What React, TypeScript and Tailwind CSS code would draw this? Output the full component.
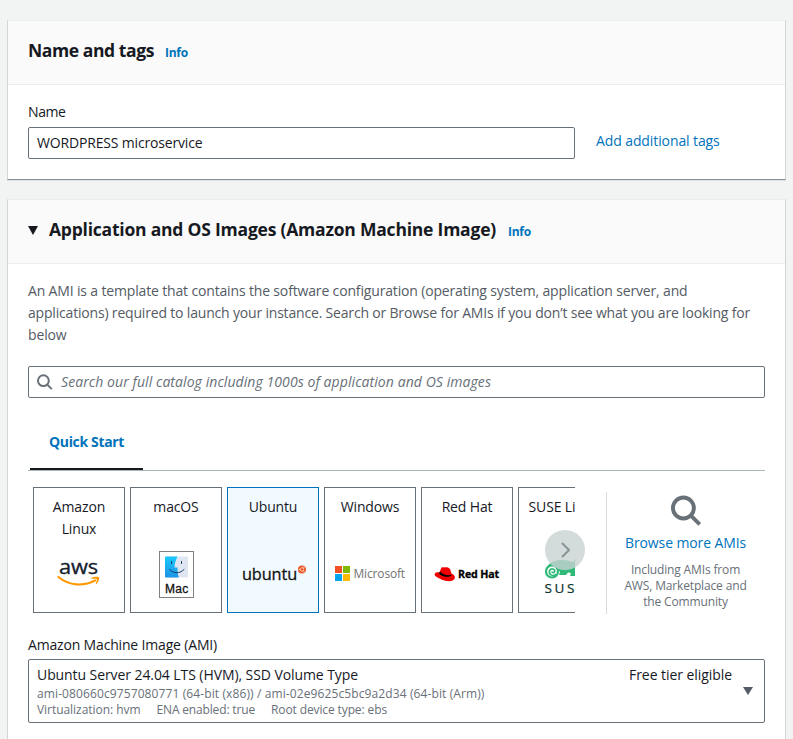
import type { ReactNode } from "react";

function SearchIcon({ className }: { className: string }) {
  return (
    <svg viewBox="0 0 16 16" className={className} fill="none" stroke="#687078" strokeWidth="2">
      <circle cx="6.400" cy="6.700" r="5.400" />
      <path d="M10.300 10.600l4.500 4.500" />
    </svg>
  );
}

function Panel({ header, className, children }: { header: ReactNode; className: string; children: ReactNode }) {
  return (
    <section className={`bg-white border border-t-[#eaeded] border-x-[#d0d5d5] ${className}`}>
      <header className="h-16 border-b border-[#eaeded] bg-[#fafafa] flex items-center px-5">{header}</header>
      {children}
    </section>
  );
}

function OsCard({ label, selected, children }: { label: ReactNode; selected?: boolean; children: ReactNode }) {
  return (
    <div
      className={`w-[92px] h-[126px] shrink-0 border flex flex-col text-center leading-[22px] pt-2 ${
        selected ? "border-[#0073bb] bg-[#f1faff]" : "border-[#687078] bg-white"
      }`}
    >
      <div className="h-[44px] whitespace-nowrap">{label}</div>
      <div className="h-[68px] flex items-center justify-center">{children}</div>
    </div>
  );
}

function AwsLogo() {
  return (
    <svg width="44" height="30" viewBox="0 0 44 30" className="overflow-visible">
      <text x="2" y="14.500" fontFamily="Open Sans, sans-serif" fontSize="20.500" textLength="39" lengthAdjust="spacingAndGlyphs" fill="#161e2d" stroke="#161e2d" strokeWidth=".35">aws</text>
      <path d="M1.500 18C12 27 27 27.500 38 21.500" fill="none" stroke="#ff9900" strokeWidth="2.200" strokeLinecap="round" />
      <path d="M34.500 18.800c3-1.300 6.900-1.200 7.500-.5.6.9-.4 4.900-2.600 6.900l-.7-.4c.8-2 1.500-4 .9-4.700-.6-.6-3-.5-5.100-.3z" fill="#ff9900" />
    </svg>
  );
}

function MacLogo() {
  return (
    <svg width="35" height="47" viewBox="0 0 35 47" className="ml-px mt-px">
      <defs>
        <linearGradient id="finder" x1="0" y1="0" x2="0" y2="1">
          <stop offset="0" stopColor="#19c8fb" />
          <stop offset="1" stopColor="#1e94e6" />
        </linearGradient>
      </defs>
      <rect x=".5" y=".5" width="34" height="46" fill="#fff" stroke="#808080" />
      <rect x="6" y="5.500" width="23" height="21" rx="1" fill="#dfe6f1" />
      <path d="M7 5.500h11.500c-2 4-3 7.500-3 11h3c0 4 .3 7 1.300 10H7a1 1 0 0 1-1-1v-19a1 1 0 0 1 1-1z" fill="url(#finder)" />
      <path d="M12.500 10.500v2M22.500 10.500v2M10.500 18.500c4 4.300 10.500 4.300 14.500 0" fill="none" stroke="#173a5e" strokeLinecap="round" />
      <text x="6" y="41.500" fontFamily="Liberation Sans, sans-serif" fontSize="12" textLength="23" stroke="#111" strokeWidth=".3" fill="#111">Mac</text>
    </svg>
  );
}

function UbuntuLogo() {
  return (
    <svg width="66" height="20" viewBox="0 0 66 20" fill="none" className="overflow-visible">
      <text x="2" y="15.500" fontFamily="Open Sans, sans-serif" fontSize="17" textLength="55" lengthAdjust="spacingAndGlyphs" fill="#111" stroke="#111" strokeWidth=".3">ubuntu</text>
      <circle cx="62" cy="5.500" r="4" fill="#e95420" />
      <circle cx="62" cy="5.500" r="1.800" stroke="#fbd5c7" strokeWidth=".9" />
      <path d="M64 2.500v1.200M58.800 5.500h1M64 7.500v1" stroke="#fff" strokeWidth="1" />
    </svg>
  );
}

function MicrosoftLogo() {
  return (
    <svg width="72" height="17" viewBox="0 0 72 17" className="-mt-px">
      <path d="M1 1h7v7H1z" fill="#f25022" />
      <path d="M9 1h7v7H9z" fill="#7fba00" />
      <path d="M1 9h7v7H1z" fill="#00a4ef" />
      <path d="M9 9h7v7H9z" fill="#ffb900" />
      <text x="19.500" y="12.700" fontFamily="Open Sans, sans-serif" fontWeight="500" fontSize="12.500" textLength="51.500" lengthAdjust="spacingAndGlyphs" fill="#737373">Microsoft</text>
    </svg>
  );
}

function RedHatLogo() {
  return (
    <svg width="66" height="18" viewBox="0 0 66 18">
      <path d="M.8 8.800c1-1.500 2.700-1.700 4.700-1.300L7 3.500C7.500 2 9 2 10.500 2.600c1.500-.8 4.500-.2 5.500 1.400l1.500 4.500c3 1.500 4.300 3.500 2.700 5.800-2.200 3-9.700 2.100-14.700-.9C2 12-.2 10.500.8 8.800z" fill="#e00" />
      <path d="M5.300 7.700c-.7 2.800 8.700 5.500 11.700 3l.5-1.300c-2.500 1.800-8.500.5-11.600-2.900z" fill="#000" />
      <text x="24" y="13" fontFamily="Open Sans, sans-serif" fontWeight="700" fontSize="11" textLength="41" lengthAdjust="spacingAndGlyphs" fill="#000" stroke="#000" strokeWidth=".3">Red Hat</text>
    </svg>
  );
}

function SuseLogo() {
  return (
    <svg width="54" height="40" viewBox="0 0 54 40">
      <path d="M1 14C5 7 12 5.500 18 6c5 0 8 2 11 2V5l6 4v11l-4 2h-6l1-3-3-.5-2 2.500h-7l1-3-3-4z" fill="#30ba78" />
      <circle cx="7" cy="17.500" r="6" fill="#fff" stroke="#30ba78" strokeWidth="2.200" />
      <path d="M11 20c-3 3.500-8 0-6.300-3.500 1.600-2.700 5.300-1.500 5 .8-.3 1.900-2.700 1.600-2.700.2" fill="none" stroke="#30ba78" strokeWidth="1.700" />
      <text x="-.5" y="38.500" fontFamily="Open Sans, sans-serif" fontWeight="500" fontSize="13.500" textLength="40" fill="#0c322c" stroke="#0c322c" strokeWidth=".2">SUSE</text>
    </svg>
  );
}

export default function App() {
  return (
    <main className="h-[739px] overflow-hidden bg-[#f2f3f3] pt-5 pl-[7px] pr-[7px] font-['Open_Sans','Noto_Sans',sans-serif] text-sm leading-[22px] tracking-[-0.15px] text-[#16191f]">
      <Panel
        className="h-[160px] border-b-[#879196] shadow-[0_1px_0_#dfe3e3]"
        header={
          <>
            <h2 className="text-[17.5px] font-bold tracking-[-0.41px] -mt-[5px]">Name and tags</h2>
            <a className="ml-[11px] text-xs font-bold tracking-[-0.25px] text-[#0073bb]">Info</a>
          </>
        }
      >
        <div className="flex px-5 pt-4">
          <div className="w-[547px]">
            <label className="block tracking-[-0.41px]">Name</label>
            <div className="mt-1 h-8 rounded-[2px] border border-[#687078] px-2 leading-[30px] tracking-[-0.17px]">
              WORDPRESS microservice
            </div>
          </div>
          <a className="ml-[21px] mt-[29px] tracking-[-0.1px] text-[#0073bb]">Add additional tags</a>
        </div>
      </Panel>

      <Panel
        className="mt-[19px] h-[600px] border-b-[#879196]"
        header={
          <>
            <svg width="10" height="9" viewBox="0 0 10 9" className="-mt-0.5">
              <path d="M0 0h10L5 9z" fill="#16191f" />
            </svg>
            <h2 className="ml-[11px] -mt-[5px] whitespace-nowrap text-[17.5px] font-bold tracking-[-0.215px]">
              Application and OS Images (Amazon Machine Image)
            </h2>
            <a className="ml-3 text-xs font-bold tracking-[-0.25px] text-[#0073bb]">Info</a>
          </>
        }
      >
        <div className="px-5 pt-4">
          <p className="whitespace-nowrap text-[#545b64]">
            <span className="block tracking-[-0.157px]">
              An AMI is a template that contains the software configuration (operating system, application server, and
            </span>
            <span className="block tracking-[-0.183px]">
              applications) required to launch your instance. Search or Browse for AMIs if you don’t see what you are looking for
            </span>
            <span className="block">below</span>
          </p>

          <div className="mt-5 flex h-8 items-center rounded-[2px] border border-[#687078] pl-2">
            <SearchIcon className="size-4" />
            <span className="ml-2 italic tracking-[0.074px] text-[#687078]">
              Search our full catalog including 1000s of application and OS images
            </span>
          </div>

          <div className="mt-8 flex h-[41px] border-b border-[#aab7b8] pl-[2px]">
            <div className="h-10 w-[113px] border-b-2 border-[#16191f] pl-[19px] pt-px font-bold tracking-[-0.347px] text-[#0073bb]">
              Quick Start
            </div>
          </div>

          <div className="flex pt-4">
            <div className="relative ml-[5px] w-[542px]">
              <div className="flex gap-[5px] overflow-hidden">
                <OsCard label={<>Amazon<br />Linux</>}><AwsLogo /></OsCard>
                <OsCard label="macOS"><MacLogo /></OsCard>
                <OsCard label="Ubuntu" selected><UbuntuLogo /></OsCard>
                <OsCard label="Windows"><MicrosoftLogo /></OsCard>
                <OsCard label="Red Hat"><RedHatLogo /></OsCard>
                <OsCard label="SUSE Linux"><div className="ml-4"><SuseLogo /></div></OsCard>
              </div>
              <div className="absolute left-[512px] top-[43px] flex size-10 items-center justify-center rounded-full bg-[#c8d2d2]/80">
                <svg width="9" height="16" viewBox="0 0 9 16" fill="none" stroke="#879596" strokeWidth="2">
                  <path d="M1 1l7 7-7 7" />
                </svg>
              </div>
            </div>
            <div className="ml-[31px] mt-[5px] flex h-[122px] w-[158px] flex-col items-center border-l border-[#d5dbdb] text-center">
              <SearchIcon className="ml-px mt-[3px] size-[31px]" />
              <a className="mt-[6px] tracking-[-0.115px] text-[#0073bb]">Browse more AMIs</a>
              <p className="mt-2 whitespace-nowrap text-xs leading-4 text-[#687078]">
                Including AMIs from<br />AWS, Marketplace and<br />the Community
              </p>
            </div>
          </div>

          <div className="mt-5 tracking-[-0.171px]">Amazon Machine Image (AMI)</div>
          <div className="mt-[3px] flex h-16 rounded-[2px] border border-[#687078] pl-2 pt-1">
            <div className="whitespace-nowrap text-xs leading-4 text-[#687078]">
              <div className="text-sm leading-[22px] tracking-[-0.081px] text-[#16191f]">
                Ubuntu Server 24.04 LTS (HVM), SSD Volume Type
              </div>
              <div className="tracking-[0.108px]">ami-080660c9757080771 (64-bit (x86)) / ami-02e9625c5bc9a2d34 (64-bit (Arm))</div>
              <div className="flex gap-4">
                <span className="tracking-[-0.046px]">Virtualization: hvm</span>
                <span className="tracking-[-0.158px]">ENA enabled: true</span>
                <span className="tracking-[-0.114px]">Root device type: ebs</span>
              </div>
            </div>
            <span className="ml-auto mr-[11px] tracking-[-0.06px]">Free tier eligible</span>
            <svg width="10" height="8" viewBox="0 0 10 8" className="mr-[11px] mt-[23px]">
              <path d="M0 0h10L5 8z" fill="#545b64" />
            </svg>
          </div>
        </div>
      </Panel>
    </main>
  );
}
